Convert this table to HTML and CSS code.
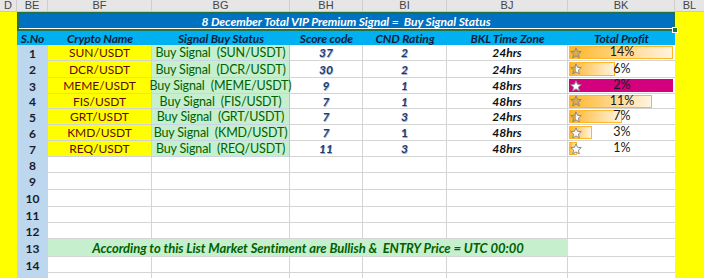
FILE: index.html
```html
<!DOCTYPE html>
<html>
<head>
<meta charset="utf-8">
<link rel="stylesheet" href="styles.css">
</head>
<body>
<svg class="defs" width="0" height="0" aria-hidden="true">
  <defs>
    <linearGradient id="halfgold" x1="0" x2="1" y1="0" y2="0">
      <stop offset="0.5" stop-color="#D9AC48"/>
      <stop offset="0.5" stop-color="#ffffff"/>
    </linearGradient>
    <path id="starshape" d="M6 0.8 L7.5 4.3 L11.3 4.6 L8.4 7.1 L9.3 10.9 L6 8.9 L2.7 10.9 L3.6 7.1 L0.7 4.6 L4.5 4.3 Z"/>
  </defs>
</svg>
<div class="sheet">
  <div class="row r-colhdr">
    <div class="ch">D</div><div class="ch">BE</div><div class="ch">BF</div><div class="ch">BG</div><div class="ch">BH</div><div class="ch">BI</div><div class="ch">BJ</div><div class="ch">BK</div><div class="ch">BL</div>
  </div>
  <div class="row r-title">
    <div class="side"></div>
    <div class="title"><span>8 December Total VIP Premium Signal =&nbsp; Buy Signal Status</span><i class="handle"></i></div>
    <div class="side"></div>
  </div>
  <div class="row r-head">
    <div class="side"></div>
    <div class="th">S.No</div><div class="th">Crypto Name</div><div class="th">Signal Buy Status</div><div class="th">Score code</div><div class="th">CND Rating</div><div class="th">BKL Time Zone</div><div class="th">Total Profit</div>
    <div class="side"></div>
  </div>

  <div class="row h16">
    <div class="side"></div><div class="sno">1</div><div class="name">SUN/USDT</div><div class="sig">Buy Signal&nbsp; (SUN/USDT)</div><div class="num">37</div><div class="num">2</div><div class="tz">24hrs</div>
    <div class="prof"><div class="bar" style="width:104px"></div><svg class="star" viewBox="0 0 12 12"><use href="#starshape" class="full"/></svg><span class="pct">14%</span></div>
    <div class="side"></div>
  </div>
  <div class="row h17">
    <div class="side"></div><div class="sno">2</div><div class="name">DCR/USDT</div><div class="sig">Buy Signal&nbsp; (DCR/USDT)</div><div class="num">30</div><div class="num">2</div><div class="tz">24hrs</div>
    <div class="prof"><div class="bar" style="width:46px"></div><svg class="star" viewBox="0 0 12 12"><use href="#starshape" class="half"/></svg><span class="pct">6%</span></div>
    <div class="side"></div>
  </div>
  <div class="row h16">
    <div class="side"></div><div class="sno">3</div><div class="name">MEME/USDT</div><div class="sig">Buy Signal&nbsp; (MEME/USDT)</div><div class="num">9</div><div class="num">1</div><div class="tz">48hrs</div>
    <div class="prof"><div class="bar bar-mag" style="width:104px"></div><svg class="star" viewBox="0 0 12 12"><use href="#starshape" class="empty"/></svg><span class="pct">2%</span></div>
    <div class="side"></div>
  </div>
  <div class="row h15">
    <div class="side"></div><div class="sno">4</div><div class="name">FIS/USDT</div><div class="sig">Buy Signal&nbsp; (FIS/USDT)</div><div class="num">7</div><div class="num">1</div><div class="tz">48hrs</div>
    <div class="prof"><div class="bar" style="width:83px"></div><svg class="star" viewBox="0 0 12 12"><use href="#starshape" class="full"/></svg><span class="pct">11%</span></div>
    <div class="side"></div>
  </div>
  <div class="row h16">
    <div class="side"></div><div class="sno">5</div><div class="name">GRT/USDT</div><div class="sig">Buy Signal&nbsp; (GRT/USDT)</div><div class="num">7</div><div class="num">3</div><div class="tz">24hrs</div>
    <div class="prof"><div class="bar" style="width:53px"></div><svg class="star" viewBox="0 0 12 12"><use href="#starshape" class="half"/></svg><span class="pct">7%</span></div>
    <div class="side"></div>
  </div>
  <div class="row h16">
    <div class="side"></div><div class="sno">6</div><div class="name">KMD/USDT</div><div class="sig">Buy Signal&nbsp; (KMD/USDT)</div><div class="num">7</div><div class="num upright">1</div><div class="tz">48hrs</div>
    <div class="prof"><div class="bar" style="width:23px"></div><svg class="star" viewBox="0 0 12 12"><use href="#starshape" class="empty"/></svg><span class="pct">3%</span></div>
    <div class="side"></div>
  </div>
  <div class="row h16">
    <div class="side"></div><div class="sno">7</div><div class="name">REQ/USDT</div><div class="sig">Buy Signal&nbsp; (REQ/USDT)</div><div class="num">11</div><div class="num">3</div><div class="tz">48hrs</div>
    <div class="prof"><div class="bar" style="width:8px"></div><svg class="star" viewBox="0 0 12 12"><use href="#starshape" class="empty"/></svg><span class="pct">1%</span></div>
    <div class="side"></div>
  </div>

  <div class="row h16"><div class="side"></div><div class="sno">8</div><div class="cell"></div><div class="cell"></div><div class="cell"></div><div class="cell"></div><div class="cell"></div><div class="cell last"></div><div class="side"></div></div>
  <div class="row h17"><div class="side"></div><div class="sno">9</div><div class="cell"></div><div class="cell"></div><div class="cell"></div><div class="cell"></div><div class="cell"></div><div class="cell last"></div><div class="side"></div></div>
  <div class="row h17"><div class="side"></div><div class="sno">10</div><div class="cell"></div><div class="cell"></div><div class="cell"></div><div class="cell"></div><div class="cell"></div><div class="cell last"></div><div class="side"></div></div>
  <div class="row h16"><div class="side"></div><div class="sno">11</div><div class="cell"></div><div class="cell"></div><div class="cell"></div><div class="cell"></div><div class="cell"></div><div class="cell last"></div><div class="side"></div></div>
  <div class="row h16"><div class="side"></div><div class="sno">12</div><div class="cell"></div><div class="cell"></div><div class="cell"></div><div class="cell"></div><div class="cell"></div><div class="cell last"></div><div class="side"></div></div>
  <div class="row h18"><div class="side"></div><div class="sno">13</div><div class="note">According to this List Market Sentiment are Bullish &amp;&nbsp; ENTRY Price = UTC 00:00</div><div class="cell last"></div><div class="side"></div></div>
  <div class="row h16"><div class="side"></div><div class="sno">14</div><div class="cell"></div><div class="cell"></div><div class="cell"></div><div class="cell"></div><div class="cell"></div><div class="cell last"></div><div class="side"></div></div>
  <div class="row h16"><div class="side"></div><div class="sno"></div><div class="cell"></div><div class="cell"></div><div class="cell"></div><div class="cell"></div><div class="cell"></div><div class="cell last"></div><div class="side"></div></div>
</div>
</body>
</html>
```

FILE: styles.css
```css
* { box-sizing: border-box; }
html, body { margin: 0; padding: 0; background: #ffffff; }
body {
  width: 704px;
  height: 278px;
  overflow: hidden;
  font-family: "Lato", "Liberation Sans", sans-serif;
  font-size: 12px;
}
.defs { position: absolute; width: 0; height: 0; }

.sheet { display: flex; flex-direction: column; width: 704px; }

.row {
  display: grid;
  grid-template-columns: 17px 31px 104px 138px 73px 84px 121px 107px 29px;
  grid-template-rows: 100%;
  flex: none;
  white-space: nowrap;
}
.row > * { min-width: 0; min-height: 0; }
.h15 { height: 15px; }
.h16 { height: 16px; }
.h17 { height: 17px; }
.h18 { height: 18px; }

/* column header strip */
.r-colhdr { height: 12px; background: #E6E6E6; border-bottom: 1px solid #C8C8C8; }
.ch {
  display: flex; align-items: center; justify-content: center;
  color: #444444; font-size: 11px; line-height: 1;
  border-right: 1px solid #CFCFCF;
  font-family: "Liberation Sans", sans-serif;
}
.ch:last-child { border-right: none; }

.side { background: #FFFF00; }

/* title row */
.r-title { height: 19px; }
.title {
  grid-column: 2 / 9;
  position: relative;
  border: 2px solid #217346;
  background: #0070C0;
  box-shadow: inset 0 -1px 0 #ffffff;
  color: #ffffff;
  font-weight: 700;
  font-style: italic;
  display: flex; align-items: center; justify-content: center;
  padding-bottom: 1px;
  font-size: 12px;
  letter-spacing: -0.05px;
}
.handle {
  position: absolute;
  right: -5px; bottom: -4px;
  width: 6px; height: 6px;
  background: #217346;
  border: 1px solid #ffffff;
}

/* table head */
.r-head { height: 14px; }
.th {
  background: #00B0F0;
  color: #0F1F3D;
  font-weight: 700;
  font-style: italic;
  display: flex; align-items: center; justify-content: center;
  font-size: 12px;
  letter-spacing: -0.1px;
}

/* data cells */
.sno {
  background: #BDD7EE;
  color: #1A1A2A;
  font-weight: 700;
  display: flex; align-items: center; justify-content: center;
  font-size: 12px;
}
.name {
  background: #FFFF00;
  color: #5E0A0A;
  display: flex; align-items: center; justify-content: center;
  border-bottom: 1px solid #D2D2D2;
  border-right: 1px solid #D2D2D2;
  font-size: 12px;
}
.sig {
  background: #C6EFCE;
  color: #006100;
  display: flex; align-items: center; justify-content: center;
  border-bottom: 1px solid #C9D5E6;
  border-right: 1px solid #A8C6E8;
  font-size: 12.5px;
  letter-spacing: -0.15px;
  overflow: visible;
}
.num {
  color: #1F3A6E;
  font-weight: 700;
  font-style: italic;
  display: flex; align-items: center; justify-content: center;
  border-bottom: 1px solid #D4D4D4;
  border-right: 1px solid #D4D4D4;
  text-shadow: 0.5px 0.5px 0 #9DB2D6;
}
.num.upright { font-style: normal; }
.tz {
  color: #111111;
  font-weight: 700;
  font-style: italic;
  display: flex; align-items: center; justify-content: center;
  border-bottom: 1px solid #D4D4D4;
  border-right: 1px solid #D4D4D4;
}
.prof {
  display: grid;
  grid-template-columns: 1fr;
  grid-template-rows: 1fr;
  border-bottom: 1px solid #D4D4D4;
  padding: 1px 2px 1px 1px;
}
.prof > * { grid-area: 1 / 1; }
.bar {
  align-self: stretch;
  justify-self: start;
  border: 1px solid #FFB628;
  background: linear-gradient(to right, #FFB628 0%, #FFD27E 45%, #FFF4E0 100%);
}
.bar-mag { background: #D5007D; border-color: #D5007D; }
.star {
  width: 12px; height: 12px;
  align-self: center;
  justify-self: start;
  margin-left: 1px;
}
.star use { stroke: #8A8A8A; stroke-width: 1; stroke-linejoin: round; }
.star .full { fill: #D9AC48; }
.star .half { fill: url(#halfgold); }
.star .empty { fill: #ffffff; }
.pct {
  align-self: center;
  justify-self: center;
  color: #1A1A1A;
  margin-left: 2px;
  line-height: 1;
  font-size: 12.5px;
}

.cell {
  border-bottom: 1px solid #D4D4D4;
  border-right: 1px solid #D4D4D4;
}
.cell.last { border-right: none; }

.note {
  grid-column: 3 / 8;
  background: #C6EFCE;
  color: #006100;
  font-weight: 700;
  font-style: italic;
  display: flex; align-items: center; justify-content: center;
  border-bottom: 1px solid #D4D4D4;
  font-size: 13px;
  letter-spacing: -0.05px;
}
```
